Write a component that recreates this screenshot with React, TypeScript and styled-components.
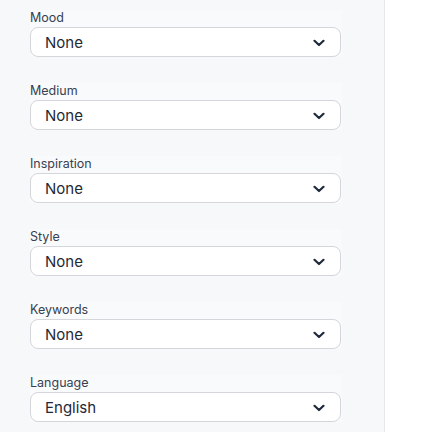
import * as React from "react";
import styled, { createGlobalStyle } from "styled-components";

const GlobalStyle = createGlobalStyle`
	html, body {
		margin: 0;
		padding: 0;
		background: #ffffff;
	}

	body {
		font-family: Inter, "Liberation Sans", Arial, sans-serif;
	}
`

const Page = styled.div`
	display: flex;
	width: 428px;
	height: 432px;
	overflow: hidden;
`

const Sidebar = styled.div`
	width: 385px;
	flex-shrink: 0;
	box-sizing: border-box;
	background: #f7f8fa;
	border-right: 1px solid #e5e7eb;
	padding: 10px 0 0 30px;
	display: flex;
	flex-direction: column;
	gap: 26px;
`

const Field = styled.div`
	width: 312px;
	display: flex;
	flex-direction: column;
	background: #f9fafb;
`

const Label = styled.label`
	font-size: 12.5px;
	line-height: 16px;
	color: #374151;
	height: 17px;
`

const Select = styled.div`
	height: 30px;
	width: 311px;
	box-sizing: border-box;
	display: flex;
	align-items: center;
	justify-content: space-between;
	padding: 0 15px 0 14px;
	background: #ffffff;
	border: 1px solid #d4d6dc;
	border-radius: 8px;
	font-size: 15px;
	color: #1f2937;
`

const Chevron = styled.svg`
	width: 12px;
	height: 12px;
	color: #1e293b;
	margin-top: 1px;
`

const fields = [
	{ label: "Mood", value: "None" },
	{ label: "Medium", value: "None" },
	{ label: "Inspiration", value: "None" },
	{ label: "Style", value: "None" },
	{ label: "Keywords", value: "None" },
	{ label: "Language", value: "English" },
]

export default function App() {
	return (
		<Page>
			<GlobalStyle />
			<Sidebar>
				{fields.map((f) => (
					<Field key={f.label}>
						<Label>{f.label}</Label>
						<Select>
							<span>{f.value}</span>
							<Chevron viewBox="0 0 12 12" fill="none">
								<path d="M1.5 3.8 L6 8 L10.5 3.8" stroke="currentColor" strokeWidth="2.2" strokeLinecap="round" strokeLinejoin="round" />
							</Chevron>
						</Select>
					</Field>
				))}
			</Sidebar>
		</Page>
	)
}
